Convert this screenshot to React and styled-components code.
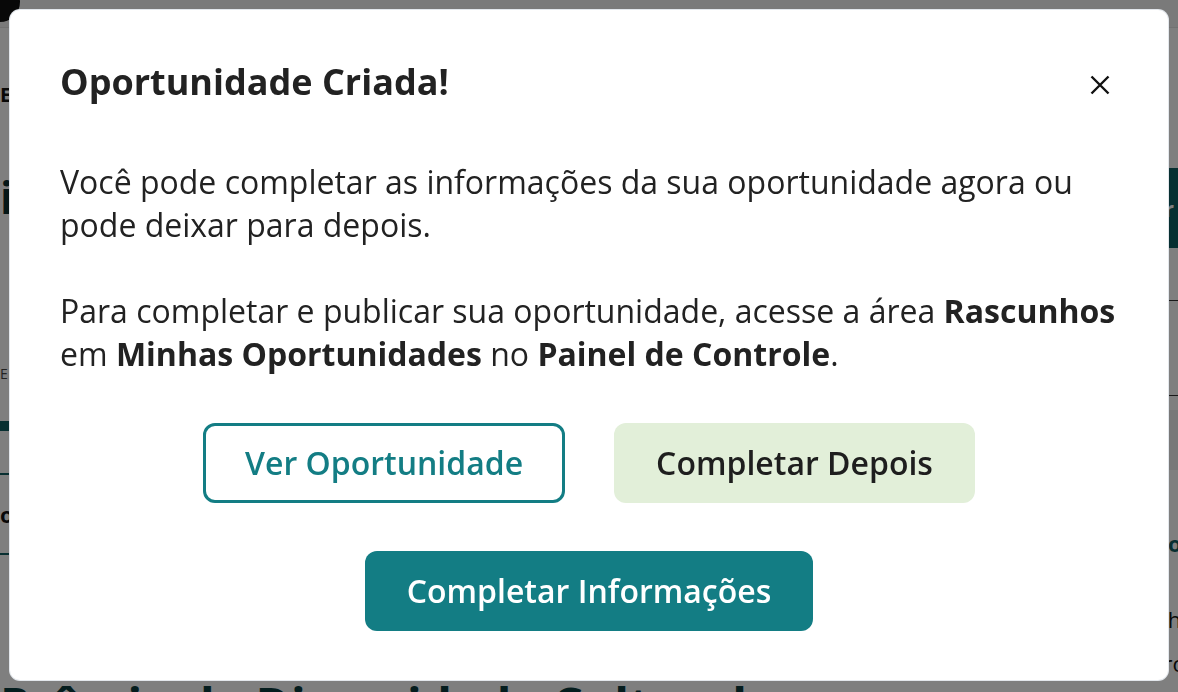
import React from 'react';
import styled, { createGlobalStyle } from 'styled-components';

const GlobalStyle = createGlobalStyle`
  html, body {
    margin: 0;
    padding: 0;
    width: 1178px;
    height: 692px;
    overflow: hidden;
  }
  body {
    font-family: "Open Sans", "Noto Sans", sans-serif;
    color: #222;
  }
  * { box-sizing: border-box; }
`;

/* ---------- page behind the dialog ---------- */

const Page = styled.div`
  height: 692px;
  overflow: hidden;
  background: #fff;
`;

const TopBar = styled.div`
  height: 46px;
  background: #f4f4f4;
  border-bottom: 1px solid #e4e4e4;
`;

const Logo = styled.div`
  width: 40px;
  height: 40px;
  margin: -18px 0 0 -20px;
  border-radius: 50%;
  background: #111;
`;

const Layout = styled.div`
  display: grid;
  grid-template-columns: 1fr 250px;
  column-gap: 40px;
`;

const Main = styled.main`
  display: flex;
  flex-direction: column;
  white-space: nowrap;
`;

const Crumb = styled.div`
  margin-top: 53px;
  font-size: 20px;
  font-weight: 700;
  color: #111;
`;

const PageTitle = styled.h1`
  margin: 63px 0 0;
  font-size: 44px;
  line-height: 1.2;
  font-weight: 700;
  color: #0b2e31;
`;

const Status = styled.div`
  margin-top: 140px;
  font-size: 14px;
  letter-spacing: 2px;
  color: #444;
`;

const TabBar = styled.div`
  margin-top: 38px;
  height: 10px;
  width: 320px;
  background: #0f5f63;
`;

const Tab = styled.div`
  border-top: 2px solid #0f5f63;
  border-bottom: 2px solid #0f5f63;
  margin-top: 42px;
  padding: 24px 0;
  font-size: 22px;
  font-weight: 700;
  color: #111;
`;

const SectionTitle = styled.h2`
  margin: 117px 0 0;
  font-size: 48px;
  font-weight: 700;
  color: #0b3a3d;
`;

const Aside = styled.aside`
  display: flex;
  flex-direction: column;
  padding-top: 140px;
  white-space: nowrap;
`;

const AsideButton = styled.div`
  height: 80px;
  background: #0f5f63;
  color: #fff;
  font-size: 22px;
  font-weight: 700;
  display: flex;
  align-items: center;
  justify-content: flex-end;
  padding-right: 4px;
`;

const AsideBox = styled.div`
  margin-top: 52px;
  height: 96px;
  border-top: 1px solid #333;
  border-bottom: 1px solid #333;
`;

const AsideBand = styled.div`
  margin-top: 14px;
  height: 60px;
  background: #f1f1f1;
`;

const AsideLink = styled.div`
  margin-top: 58px;
  font-size: 22px;
  font-weight: 700;
  color: #0f5f63;
`;

const AsideText = styled.div`
  margin-top: ${p => p.$gap}px;
  font-size: 22px;
  color: #111;
`;

/* ---------- dialog ---------- */

const Overlay = styled.div`
  position: fixed;
  inset: 0;
  background: rgba(0, 0, 0, 0.5);
`;

const Dialog = styled.div`
  position: fixed;
  top: 10px;
  left: 10px;
  right: 10px;
  background: #fff;
  box-shadow: 0 0 0 1px #e3e7ec;
  border-radius: 10px;
  padding: 50px 50px 49px;
  display: flex;
  flex-direction: column;
`;

const Header = styled.div`
  display: flex;
  align-items: flex-start;
  justify-content: space-between;
`;

const Title = styled.h2`
  margin: 0;
  font-size: 36px;
  line-height: 43px;
  font-weight: 700;
  color: #222;
`;

const CloseButton = styled.button`
  width: 36px;
  height: 36px;
  margin-top: 7px;
  padding: 0;
  border: 0;
  background: none;
  display: flex;
  align-items: center;
  justify-content: center;
  cursor: pointer;
`;

const Body = styled.div`
  margin-top: 57px;
  font-size: 32px;
  line-height: 43px;
  color: #222;

  p { margin: 0; }
  p + p { margin-top: 43px; }
  strong { font-weight: 700; }
`;

const Actions = styled.div`
  margin-top: 48px;
  display: flex;
  flex-direction: column;
  align-items: center;
  gap: 48px;
`;

const ButtonRow = styled.div`
  display: flex;
  justify-content: center;
  gap: 49px;
`;

const Button = styled.button`
  font-family: inherit;
  font-size: 32px;
  line-height: 42px;
  font-weight: 600;
  padding: 16px 39px;
  border-radius: 12px;
  border: 3px solid ${p => (p.$variant === 'outline' ? '#137d84' : 'transparent')};
  background: ${p =>
    p.$variant === 'primary' ? '#137d84' : p.$variant === 'soft' ? '#e2efd9' : '#fff'};
  color: ${p =>
    p.$variant === 'primary' ? '#fff' : p.$variant === 'soft' ? '#1e1e1e' : '#137d84'};
  cursor: pointer;
`;

const CloseIcon = () => (
  <svg width="20" height="20" viewBox="0 0 20 20" fill="none">
    <path d="M1.5 1.5 L18.5 18.5 M18.5 1.5 L1.5 18.5" stroke="#111" strokeWidth="2.4" />
  </svg>
);

export default function App() {
  return (
    <>
      <GlobalStyle />
      <Page>
        <TopBar>
          <Logo />
        </TopBar>
        <Layout>
          <Main>
            <Crumb>EDITAIS</Crumb>
            <PageTitle>iniciativas culturais</PageTitle>
            <Status>EM ANDAMENTO</Status>
            <TabBar />
            <Tab>observações</Tab>
            <SectionTitle>Prêmio de Diversidade Cultural</SectionTitle>
          </Main>
          <Aside>
            <AsideButton>Inscrever</AsideButton>
            <AsideBox />
            <AsideBand />
            <AsideLink>Ver edital publicado no site</AsideLink>
            <AsideText $gap={46}>Publicado em 12 de junho de 2024</AsideText>
            <AsideText $gap={14}>Prazo de entrega das propostas</AsideText>
          </Aside>
        </Layout>
      </Page>

      <Overlay />
      <Dialog role="dialog">
        <Header>
          <Title>Oportunidade Criada!</Title>
          <CloseButton aria-label="Fechar">
            <CloseIcon />
          </CloseButton>
        </Header>
        <Body>
          <p>Você pode completar as informações da sua oportunidade agora ou pode deixar para depois.</p>
          <p>
            Para completar e publicar sua oportunidade, acesse a área <strong>Rascunhos</strong> em{' '}
            <strong>Minhas Oportunidades</strong> no <strong>Painel de Controle</strong>.
          </p>
        </Body>
        <Actions>
          <ButtonRow>
            <Button $variant="outline">Ver Oportunidade</Button>
            <Button $variant="soft">Completar Depois</Button>
          </ButtonRow>
          <Button $variant="primary">Completar Informações</Button>
        </Actions>
      </Dialog>
    </>
  );
}
